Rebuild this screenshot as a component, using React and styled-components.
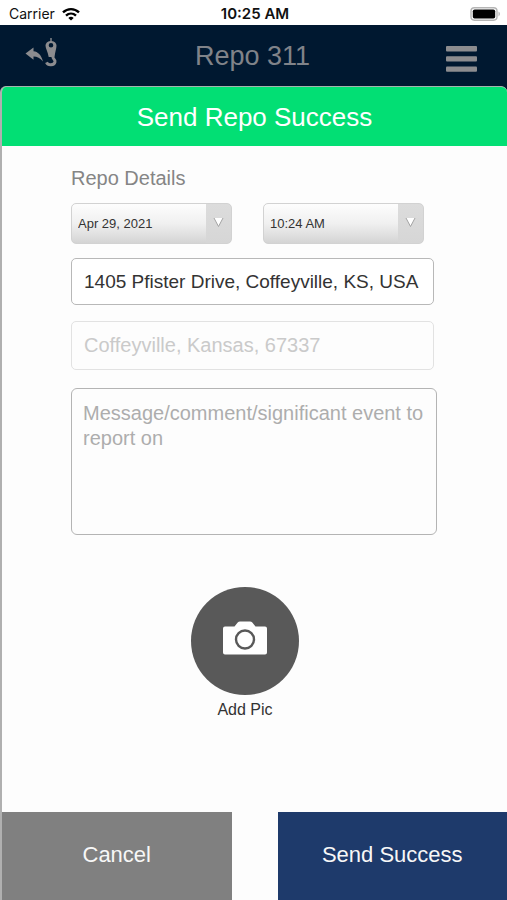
import { useState } from "react";
import styled, { createGlobalStyle } from "styled-components";

const GlobalStyle = createGlobalStyle`
  * {
    box-sizing: border-box;
  }
  body {
    margin: 0;
    background-color: #001830;
    font-family: "Liberation Sans", Arial, sans-serif;
  }
  button,
  input,
  select,
  textarea {
    font-family: inherit;
    margin: 0;
  }
`;

const Screen = styled.div`
  display: flex;
  flex-direction: column;
  min-height: 100vh;
`;

//status bar
const StatusBar = styled.div`
  display: grid;
  grid-template-columns: 1fr auto 1fr;
  align-items: center;
  height: 25px;
  padding: 2px 6px 0 9px;
  background-color: #fff;
  color: #111;
  font-family: Inter, "Liberation Sans", sans-serif;
  font-size: 14px;
`;

const Carrier = styled.div`
  display: flex;
  align-items: center;
  gap: 7px;
`;

const Clock = styled.time`
  font-size: 15px;
  font-weight: 600;
`;

const Battery = styled.svg`
  justify-self: end;
`;

//app bar behind the dialog
const NavBar = styled.header`
  display: grid;
  grid-template-columns: 1fr auto 1fr;
  align-items: center;
  height: 61px;
  padding: 0 26px 0 24px;
  background-color: #001830;
`;

const NavTitle = styled.h1`
  margin: 0;
  padding-top: 2px;
  color: #808389;
  font-size: 27px;
  font-weight: normal;
`;

const IconButton = styled.button`
  display: flex;
  justify-self: ${(props) => props.$align};
  padding: 0;
  border: 0;
  background: none;
  color: #8c8c8f;
`;

const BackButton = styled(IconButton)`
  padding-bottom: 5px;
`;

const MenuButton = styled(IconButton)`
  padding: 6px 4px 0 0;
`;

//dialog
const Dialog = styled.form`
  display: flex;
  flex: 1;
  flex-direction: column;
  border-top: 1px solid #a5b5ad;
  border-left: 2px solid #b0b0b0;
  border-radius: 6px 6px 0 0;
  background-color: #fdfdfd;
  overflow: hidden;
`;

const DialogTitle = styled.h2`
  margin: 0;
  padding-top: 1px;
  background-color: #02df74;
  color: #fff;
  font-size: 26px;
  font-weight: normal;
  line-height: 58px;
  text-align: center;
`;

const Fields = styled.div`
  display: flex;
  flex: 1;
  flex-direction: column;
  padding: 20px 70px 0 69px;
`;

const SectionTitle = styled.h3`
  margin: 0 0 13px;
  color: #858585;
  font-size: 20px;
  font-weight: normal;
  line-height: 24px;
`;

const PickerRow = styled.div`
  display: flex;
  gap: 31px;
  margin-bottom: 14px;
  padding-right: 13px;
`;

const PickerBox = styled.div`
  position: relative;
  flex: 1;
`;

const Picker = styled.select`
  display: block;
  width: 100%;
  height: 41px;
  padding: 0 26px 0 6px;
  border: 1px solid #d2d2d2;
  border-radius: 5px;
  appearance: none;
  background:
    linear-gradient(#dcdcdc, #d6d6d6) right / 25px 100% no-repeat,
    linear-gradient(#fdfdfd, #f0f0f0 50%, #d4d4d4);
  color: #333;
  font-size: 13px;
`;

const PickerArrow = styled.svg`
  position: absolute;
  top: 14px;
  right: 8px;
  pointer-events: none;
`;

const TextInput = styled.input`
  width: calc(100% - 3px);
  height: ${(props) => props.$height};
  margin-bottom: ${(props) => props.$space};
  padding: 0 0 0 12px;
  border: 1px solid #b8b8b8;
  border-radius: 5px;
  background-color: #fff;
  color: #333;
  font-size: ${(props) => props.$size};

  &:disabled {
    border-color: #e2e2e2;
    background-color: #fdfdfd;
  }
  &::placeholder {
    color: #cacaca;
    opacity: 1;
  }
`;

const Message = styled.textarea`
  display: block;
  width: 100%;
  height: 147px;
  padding: 12px 4px 12px 11px;
  border: 1px solid #b4b4b4;
  border-radius: 6px;
  background-color: #fdfdfd;
  color: #333;
  font-size: 20px;
  line-height: 25px;
  resize: none;

  &::placeholder {
    color: #adadad;
    opacity: 1;
  }
`;

const AddPic = styled.button`
  display: flex;
  flex-direction: column;
  align-items: center;
  align-self: center;
  gap: 6px;
  margin: 52px 18px 40px 0;
  padding: 0;
  border: 0;
  background: none;
  color: #333;
  font-size: 16px;
`;

const PicCircle = styled.span`
  display: flex;
  align-items: center;
  justify-content: center;
  width: 108px;
  height: 108px;
  padding-bottom: 6px;
  border-radius: 50%;
  background-color: #595959;
`;

const Footer = styled.footer`
  display: flex;
  gap: 46px;
`;

const FooterButton = styled.button`
  flex: 1;
  height: 88px;
  padding: 0 0 3px;
  border: 0;
  background-color: ${(props) => props.$color};
  color: #f7f7f7;
  font-size: 22px;
`;

function WifiIcon() {
  return (
    <svg width="18" height="14" viewBox="0 0 18 14" fill="none" stroke="#000" strokeWidth="2.4">
      <path d="M1 5.3C5.6 1 12.4 1 17 5.3" />
      <path d="M4 8.6c2.9-2.7 7.1-2.7 10 0" />
      <path d="M6.3 10.9c1.6-1.4 3.8-1.4 5.4 0L9 13.6z" fill="#000" stroke="none" />
    </svg>
  );
}

function BatteryIcon() {
  return (
    <Battery width="31" height="14" viewBox="0 0 31 14">
      <rect x="1" y="0.8" width="26" height="12.4" rx="3.4" fill="#fff" stroke="#b5b5b5" strokeWidth="1.4" />
      <rect x="2.8" y="2.4" width="22.4" height="9.2" rx="1.8" fill="#000" />
      <path d="M28.5 4.6c1.9.9 1.9 3.9 0 4.8z" fill="#b5b5b5" />
    </Battery>
  );
}

//arrow and tow hook
function HookIcon() {
  return (
    <svg width="34" height="32" viewBox="0 0 34 32" fill="currentColor">
      <path d="M1.5 16.5L9.5 10.5v3.7c4.500.5 7.500 3.300 9.500 10.300-2.900-3.600-5.700-4.900-9.500-5v3.300z" />
      <path
        fillRule="evenodd"
        d="M26.300 1h1.400v3c2.800.4 4.800 2.200 4.800 4.600 0 2.900-1.300 6.200-2 11.400h-5.800c-.9-5.200-3.200-8.500-3.200-11.400 0-2.400 2-4.200 4.800-4.600zM27 5.900a2.300 2.300 0 1 0 0 4.600 2.300 2.300 0 0 0 0-4.600z"
      />
      <path
        d="M29 19.500c-.8 2.600 2.600 2.900 2 5.300-.9 3.600-6.800 4.200-8.500.6"
        fill="none"
        stroke="currentColor"
        strokeWidth="3"
      />
    </svg>
  );
}

function MenuIcon() {
  return (
    <svg width="31" height="26" viewBox="0 0 31 26" fill="currentColor">
      <rect y="0" width="31" height="5.4" rx="1" />
      <rect y="10.2" width="31" height="5.4" rx="1" />
      <rect y="20.4" width="31" height="5.4" rx="1" />
    </svg>
  );
}

function CameraIcon() {
  return (
    <svg width="46" height="34" viewBox="0 0 46 34">
      <path
        d="M3 5.500h9.500l3.200-4Q16.600.5 18 .5h10q1.400 0 2.300 1l3.200 4H43q2 0 2 2v24q0 2-2 2H3q-2 0-2-2v-24q0-2 2-2z"
        fill="#fff"
      />
      <circle cx="23" cy="18.5" r="9" fill="none" stroke="#595959" strokeWidth="2.4" />
    </svg>
  );
}

function SelectField({ label, value }) {
  return (
    <PickerBox>
      <Picker aria-label={label} defaultValue={value}>
        <option>{value}</option>
      </Picker>
      <PickerArrow width="11" height="11" viewBox="0 0 11 11">
        <path d="M1 1h9L5.5 9.5z" fill="#fff" />
        <path d="M1 1l4.5 8.5L10 1" fill="none" stroke="#a2a2a2" />
      </PickerArrow>
    </PickerBox>
  );
}

export default function App() {
  const [address, setAddress] = useState("1405 Pfister Drive, Coffeyville, KS, USA");
  const [message, setMessage] = useState("");

  return (
    <>
      <GlobalStyle />
      <Screen>
        <StatusBar>
          <Carrier>
            Carrier
            <WifiIcon />
          </Carrier>
          <Clock>10:25 AM</Clock>
          <BatteryIcon />
        </StatusBar>
        <NavBar>
          <BackButton type="button" aria-label="Back" $align="start">
            <HookIcon />
          </BackButton>
          <NavTitle>Repo 311</NavTitle>
          <MenuButton type="button" aria-label="Menu" $align="end">
            <MenuIcon />
          </MenuButton>
        </NavBar>
        <Dialog onSubmit={(e) => e.preventDefault()}>
          <DialogTitle>Send Repo Success</DialogTitle>
          <Fields>
            <SectionTitle>Repo Details</SectionTitle>
            <PickerRow>
              <SelectField label="Date" value="Apr 29, 2021" />
              <SelectField label="Time" value="10:24 AM" />
            </PickerRow>
            <TextInput
              aria-label="Address"
              value={address}
              onChange={(e) => setAddress(e.target.value)}
              $height="47px"
              $space="16px"
              $size="19px"
            />
            <TextInput
              aria-label="City, state and zip"
              placeholder="Coffeyville, Kansas, 67337"
              disabled
              $height="49px"
              $space="18px"
              $size="20px"
            />
            <Message
              aria-label="Message"
              placeholder="Message/comment/significant event to report on"
              value={message}
              onChange={(e) => setMessage(e.target.value)}
            />
            <AddPic type="button">
              <PicCircle>
                <CameraIcon />
              </PicCircle>
              Add Pic
            </AddPic>
          </Fields>
          <Footer>
            <FooterButton type="button" $color="#808080">
              Cancel
            </FooterButton>
            <FooterButton type="submit" $color="#1e3a6b">
              Send Success
            </FooterButton>
          </Footer>
        </Dialog>
      </Screen>
    </>
  );
}
